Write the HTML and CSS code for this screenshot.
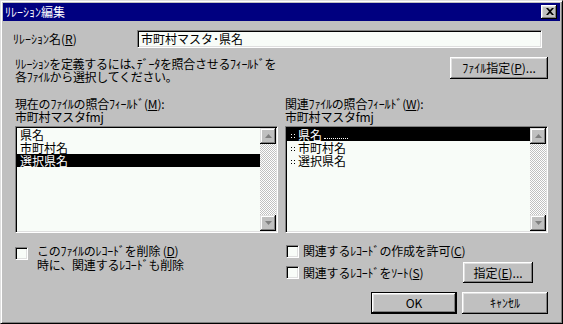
FILE: index.html
```html
<!DOCTYPE html>
<html lang="ja">
<head>
<meta charset="utf-8">
<title>ﾘﾚｰｼｮﾝ編集</title>
<link rel="stylesheet" href="styles.css">
</head>
<body>
<div class="dialog">
  <div class="titlebar">
    <span class="title">ﾘﾚｰｼｮﾝ編集</span>
    <button class="close" aria-label="閉じる"><svg width="8" height="7" viewBox="0 0 8 7"><path d="M0 0h2l2 2 2-2h2L5 3.5 8 7H6L4 5 2 7H0l3-3.5z" fill="#000"/></svg></button>
  </div>
  <div class="content">
    <div class="name-row">
      <span class="name-label">ﾘﾚｰｼｮﾝ名(<u>R</u>)</span>
      <div class="textbox">市町村マスタ･県名</div>
    </div>
    <div class="desc-row">
      <p class="desc">ﾘﾚｰｼｮﾝを定義するには､ﾃﾞｰﾀを照合させるﾌｨｰﾙﾄﾞを<br>各ﾌｧｲﾙから選択してください｡</p>
      <button class="btn btn-file">ﾌｧｲﾙ指定(<u>P</u>)...</button>
    </div>
    <div class="lists">
      <div class="col">
        <div class="col-label">現在のﾌｧｲﾙの照合ﾌｨｰﾙﾄﾞ(<u>M</u>):<br>市町村マスタfmj</div>
        <div class="listbox">
          <ul class="items">
            <li>県名</li>
            <li>市町村名</li>
            <li class="sel">選択県名</li>
          </ul>
          <div class="scrollbar">
            <span class="sb-btn"><svg width="7" height="4" viewBox="0 0 7 4"><path d="M3.5 0L7 4H0z" fill="#808080"/></svg></span>
            <span class="sb-track"></span>
            <span class="sb-btn"><svg width="7" height="4" viewBox="0 0 7 4"><path d="M0 0h7L3.5 4z" fill="#808080"/></svg></span>
          </div>
        </div>
      </div>
      <div class="col">
        <div class="col-label">関連ﾌｧｲﾙの照合ﾌｨｰﾙﾄﾞ(<u>W</u>):<br>市町村マスタfmj</div>
        <div class="listbox">
          <ul class="items items-rel">
            <li class="sel"><span class="mark"></span>県名<span class="focus-dots"></span></li>
            <li><span class="mark"></span>市町村名</li>
            <li><span class="mark"></span>選択県名</li>
          </ul>
          <div class="scrollbar">
            <span class="sb-btn"><svg width="7" height="4" viewBox="0 0 7 4"><path d="M3.5 0L7 4H0z" fill="#808080"/></svg></span>
            <span class="sb-track"></span>
            <span class="sb-btn"><svg width="7" height="4" viewBox="0 0 7 4"><path d="M0 0h7L3.5 4z" fill="#808080"/></svg></span>
          </div>
        </div>
      </div>
    </div>
    <div class="bottom">
      <div class="col bottom-left">
        <span class="cb"></span>
        <span class="cb-text">このﾌｧｲﾙのﾚｺｰﾄﾞを削除 (<u>D</u>)<br>時に、関連するﾚｺｰﾄﾞも削除</span>
      </div>
      <div class="col bottom-right">
        <div class="opt-row">
          <span class="cb"></span>
          <span class="opt-text">関連するﾚｺｰﾄﾞの作成を許可(<u>C</u>)</span>
        </div>
        <div class="opt-row opt-row-b">
          <span class="cb"></span>
          <span class="opt-text">関連するﾚｺｰﾄﾞをｿｰﾄ(<u>S</u>)</span>
          <button class="btn btn-spec">指定(<u>E</u>)...</button>
        </div>
        <div class="actions">
          <button class="btn btn-ok">OK</button>
          <button class="btn btn-cancel">ｷｬﾝｾﾙ</button>
        </div>
      </div>
    </div>
  </div>
</div>
</body>
</html>
```
FILE: styles.css
```css
* {
  box-sizing: border-box;
  margin: 0;
  padding: 0;
}

html, body {
  width: 563px;
  height: 324px;
  overflow: hidden;
}

body {
  font-family: "Noto Sans CJK JP", "Noto Sans", sans-serif;
  font-size: 12px;
  color: #000;
  background: #c0c0c0;
}

u {
  text-decoration: underline;
  text-underline-offset: 1px;
}

.dialog {
  width: 563px;
  height: 324px;
  background: #c0c0c0;
  border: 1px solid;
  border-color: #dfdfdf #000 #000 #dfdfdf;
  box-shadow: inset 1px 1px #fff, inset -1px -1px #808080;
  padding: 2px;
}

.titlebar {
  height: 18px;
  background: #000080;
  color: #fff;
  display: flex;
  align-items: center;
  justify-content: space-between;
  padding: 0 3px 0 2px;
}

.title {
  line-height: 18px;
  font-size: 12px;
}

.close {
  width: 16px;
  height: 14px;
  border: none;
  background: #c0c0c0;
  box-shadow: inset -1px -1px #000, inset 1px 1px #fff, inset -2px -2px #808080, inset 2px 2px #dfdfdf;
  display: flex;
  align-items: center;
  justify-content: center;
  padding: 0 0 1px 1px;
}

.content {
  padding-left: 12px;
}

.name-row {
  display: flex;
  align-items: center;
  height: 18px;
  margin-top: 9px;
}

.name-label {
  width: 124px;
  margin-left: -2px;
  line-height: 14px;
}

.textbox {
  width: 405px;
  height: 18px;
  background: #f8fcf8;
  border: 1px solid;
  border-color: #808080 #fff #fff #808080;
  box-shadow: inset 1px 1px #000, inset -1px -1px #dfdfdf;
  padding: 0 3px;
  line-height: 16px;
}

.desc-row {
  width: 533px;
  display: flex;
  justify-content: space-between;
  align-items: flex-start;
  margin-top: 9px;
}

.desc {
  line-height: 13px;
  letter-spacing: -0.3px;
}

.btn {
  font: inherit;
  color: #000;
  background: #c0c0c0;
  border: none;
  box-shadow: inset -1px -1px #000, inset 1px 1px #fff, inset -2px -2px #808080, inset 2px 2px #dfdfdf;
  display: flex;
  align-items: center;
  justify-content: center;
  line-height: 14px;
}

.btn-file {
  width: 98px;
  height: 22px;
}

.lists {
  display: flex;
  gap: 7px;
  margin-top: 14px;
}

.col {
  width: 263px;
}

.col-label {
  line-height: 13px;
  letter-spacing: -0.2px;
}

.listbox {
  margin-top: 3px;
  height: 107px;
  display: flex;
  background: #f8fcf8;
  border: 1px solid;
  border-color: #808080 #fff #fff #808080;
  box-shadow: inset 1px 1px #000, inset -1px -1px #dfdfdf;
  padding: 1px;
}

.items {
  list-style: none;
  flex: 1;
}

.items li {
  height: 13px;
  line-height: 13px;
  padding-left: 3px;
  white-space: nowrap;
}

.items li.sel {
  background: #000;
  color: #fff;
}

.items-rel li {
  padding-left: 3px;
  display: flex;
  align-items: center;
}

.mark {
  flex: none;
  width: 7px;
  height: 13px;
  margin-right: 1px;
  background:
    radial-gradient(circle, currentColor 0.7px, transparent 0.8px) 0 5px / 3px 3px repeat;
  background-clip: content-box;
  padding: 5px 1px 2px 0;
}

.focus-dots {
  width: 24px;
  margin-left: 2px;
  height: 1px;
  align-self: flex-end;
  margin-bottom: 2px;
  border-bottom: 1px dotted #fff;
}

.scrollbar {
  width: 16px;
  display: flex;
  flex-direction: column;
}

.sb-btn {
  height: 16px;
  background: #c0c0c0;
  box-shadow: inset -1px -1px #000, inset 1px 1px #dfdfdf, inset -2px -2px #808080, inset 2px 2px #fff;
  display: flex;
  align-items: center;
  justify-content: center;
}

.sb-track {
  flex: 1;
  background: repeating-conic-gradient(#fff 0 25%, #c0c0c0 0 50%) 0 0 / 2px 2px;
}

.bottom {
  display: flex;
  gap: 7px;
  margin-top: 11px;
}

.bottom-left {
  display: flex;
  align-items: flex-start;
}

.cb {
  flex: none;
  width: 13px;
  height: 13px;
  background: #f8fcf8;
  border: 1px solid;
  border-color: #808080 #fff #fff #808080;
  box-shadow: inset 1px 1px #000, inset -1px -1px #dfdfdf;
}

.bottom-left .cb {
  margin-top: 3px;
}

.cb-text {
  margin-left: 9px;
  line-height: 14px;
  letter-spacing: -0.2px;
}

.opt-row {
  display: flex;
  align-items: center;
  height: 14px;
  padding-left: 1px;
}

.opt-row-b {
  height: 21px;
  margin-top: 4px;
}

.opt-text {
  margin-left: 4px;
  line-height: 14px;
  letter-spacing: -0.2px;
}

.btn-spec {
  width: 70px;
  height: 21px;
  margin-left: auto;
  margin-right: 15px;
}

.actions {
  display: flex;
  justify-content: flex-end;
  gap: 5px;
  margin-top: 9px;
}

.btn-ok {
  width: 86px;
  height: 22px;
  border: 1px solid #000;
  font-weight: normal;
}

.btn-cancel {
  width: 86px;
  height: 22px;
}
```
